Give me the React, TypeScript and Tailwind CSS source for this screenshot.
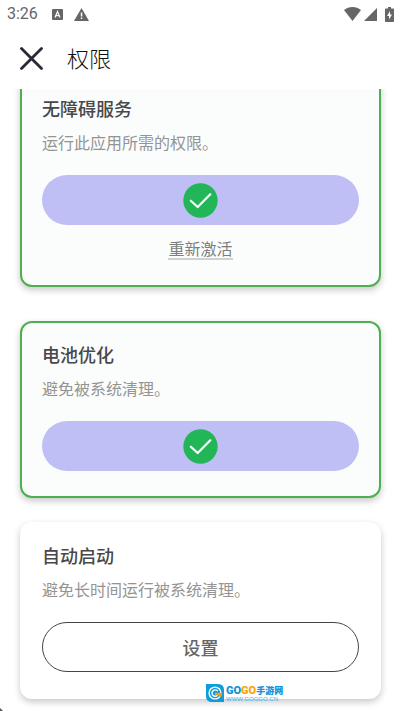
import { ReactNode } from "react";

const CARD_TITLE = "text-[18px] leading-6 font-medium text-[#48484a]";

function StatusBar() {
  return (
    <div className="flex h-7 items-center justify-between pl-[7px] pr-[6px] text-[#666]">
      <div className="flex items-center">
        <span className="font-[Roboto,sans-serif] text-base leading-7">3:26</span>
        <svg className="ml-[14px] h-[11px] w-[11px]" viewBox="0 0 11 11">
          <rect width="11" height="11" rx="1" fill="currentColor" />
          <path d="M3 8.5 5.5 2.5 8 8.5M3.9 6.6h3.2" fill="none" stroke="#fff" strokeWidth="1.2" />
        </svg>
        <svg className="ml-[11px] h-[13px] w-[15px]" viewBox="0 0 15 13">
          <path d="M7.5 0 15 13H0z" fill="currentColor" />
          <path d="M6.8 4.5h1.5v4H6.8zM6.8 9.5h1.5V11H6.8z" fill="#fff" />
        </svg>
      </div>
      <div className="flex items-center">
        <svg className="h-[14px] w-[17px]" viewBox="0 0 17 14">
          <path d="M0 3C4.8-1 12.2-1 17 3L8.5 14z" fill="currentColor" />
        </svg>
        <svg className="ml-[3px] h-[13px] w-[13px]" viewBox="0 0 13 13">
          <path d="M13 0v13H0z" fill="currentColor" />
        </svg>
        <svg className="ml-2 h-[15px] w-[9px]" viewBox="0 0 9 15">
          <path d="M3 0h3v1.5h2.2q.8 0 .8.8v11.9q0 .8-.8.8H.8q-.8 0-.8-.8V2.3q0-.8.8-.8H3z" fill="currentColor" />
          <path d="M5 4 2 9h2v3.5l3-5H5z" fill="#fff" />
        </svg>
      </div>
    </div>
  );
}

function CheckPill({ label }: { label: string }) {
  return (
    <button aria-label={label} className="mt-[21px] flex h-[50px] w-full items-center justify-center rounded-full bg-[#bfbff5]">
      <svg className="h-[35px] w-[35px]" viewBox="0 0 35 35">
        <circle cx="17.5" cy="17.5" r="17.2" fill="#22b658" />
        <path d="M7.8 17.7 14.7 24 27.3 11.3" fill="none" stroke="#fff" strokeWidth="2.2" strokeLinecap="round" strokeLinejoin="round" />
      </svg>
    </button>
  );
}

function PermissionCard({
  title,
  desc,
  granted,
  className,
  children,
}: {
  title: string;
  desc: string;
  granted?: boolean;
  className?: string;
  children: ReactNode;
}) {
  return (
    <section
      className={`rounded-xl border-2 px-5 pt-[19px] pb-[25px] shadow-[0_3px_7px_rgba(0,0,0,0.22)] ${
        granted ? "border-[#4caf50] bg-[#fbfdfc]" : "border-white bg-white"
      } ${className ?? ""}`}
    >
      <h2 className={CARD_TITLE}>{title}</h2>
      <p className="mt-[10px] text-base leading-6 text-[#949494]">{desc}</p>
      {children}
    </section>
  );
}

function SiteBadge() {
  return (
    <div className="absolute bottom-[9px] left-[206px] flex items-start gap-[2px]">
      <svg className="h-[18px] w-[18px]" viewBox="0 0 18 18">
        <path d="M0 0h12q6 0 6 6v12H6q-6 0-6-6z" fill="#0d9ddb" />
        <circle cx="9" cy="9" r="5.9" fill="none" stroke="#fff" strokeWidth="1.4" />
        <path d="M11.8 7.2A3.2 3.2 0 1 0 11.5 11.300" fill="none" stroke="#fff" strokeWidth="1.4" />
        <path d="M9 8.8h7.500q-.2 3-2.500 4.400l-1.500-2H9z" fill="#f79a1c" />
      </svg>
      <div>
        <div className="flex h-[13px] items-center">
          <span className="font-[Roboto,sans-serif] text-[11px] leading-[13px] font-black text-[#0c93dc]">GO</span>
          <span className="font-[Roboto,sans-serif] text-[11px] leading-[13px] font-black text-[#fba30a]">GO</span>
          <span className="text-[9px] leading-[13px] font-black text-[#0c93dc]">手游网</span>
        </div>
        <div className="font-['Liberation_Sans',sans-serif] text-[6px] leading-[5px] text-[#3aaee6]">WWW.GOGGO.CN</div>
      </div>
    </div>
  );
}

export default function App() {
  return (
    <div className="relative min-h-screen overflow-hidden bg-white font-['Noto_Sans_CJK_SC',sans-serif]">
      <StatusBar />
      <header className="flex h-[61px] items-center gap-6 pl-5">
        <button aria-label="关闭">
          <svg className="h-[23px] w-[23px]" viewBox="0 0 23 23">
            <path d="M1.5 1.5 21.5 21.5M21.5 1.5 1.5 21.5" stroke="#292936" strokeWidth="2.8" strokeLinecap="round" />
          </svg>
        </button>
        <h1 className="pb-1 text-[22px] leading-8 font-light text-[#111]">权限</h1>
      </header>

      <main className="overflow-hidden pr-[19px] pb-3 pl-5">
        <PermissionCard title="无障碍服务" desc="运行此应用所需的权限。" granted className="-mt-[14px]">
          <CheckPill label="无障碍服务" />
          <div className="mt-[13px] flex justify-center">
            <a href="#" className="border-b-2 border-[#cfd1d0] text-base leading-5 text-[#7d7d7d]">重新激活</a>
          </div>
        </PermissionCard>

        <PermissionCard title="电池优化" desc="避免被系统清理。" granted className="mt-[34px]">
          <CheckPill label="电池优化" />
        </PermissionCard>

        <PermissionCard title="自动启动" desc="避免长时间运行被系统清理。" className="mt-6">
          <button className="mt-[21px] h-[50px] w-full rounded-full border border-[#444] text-[18px] leading-6 font-medium text-[#666]">
            设置
          </button>
        </PermissionCard>
      </main>

      <SiteBadge />
      <svg className="absolute bottom-0 left-0 h-[3px] w-[3px]" viewBox="0 0 3 3">
        <path d="M0 0 3 3H0z" fill="#555" />
      </svg>
    </div>
  );
}
